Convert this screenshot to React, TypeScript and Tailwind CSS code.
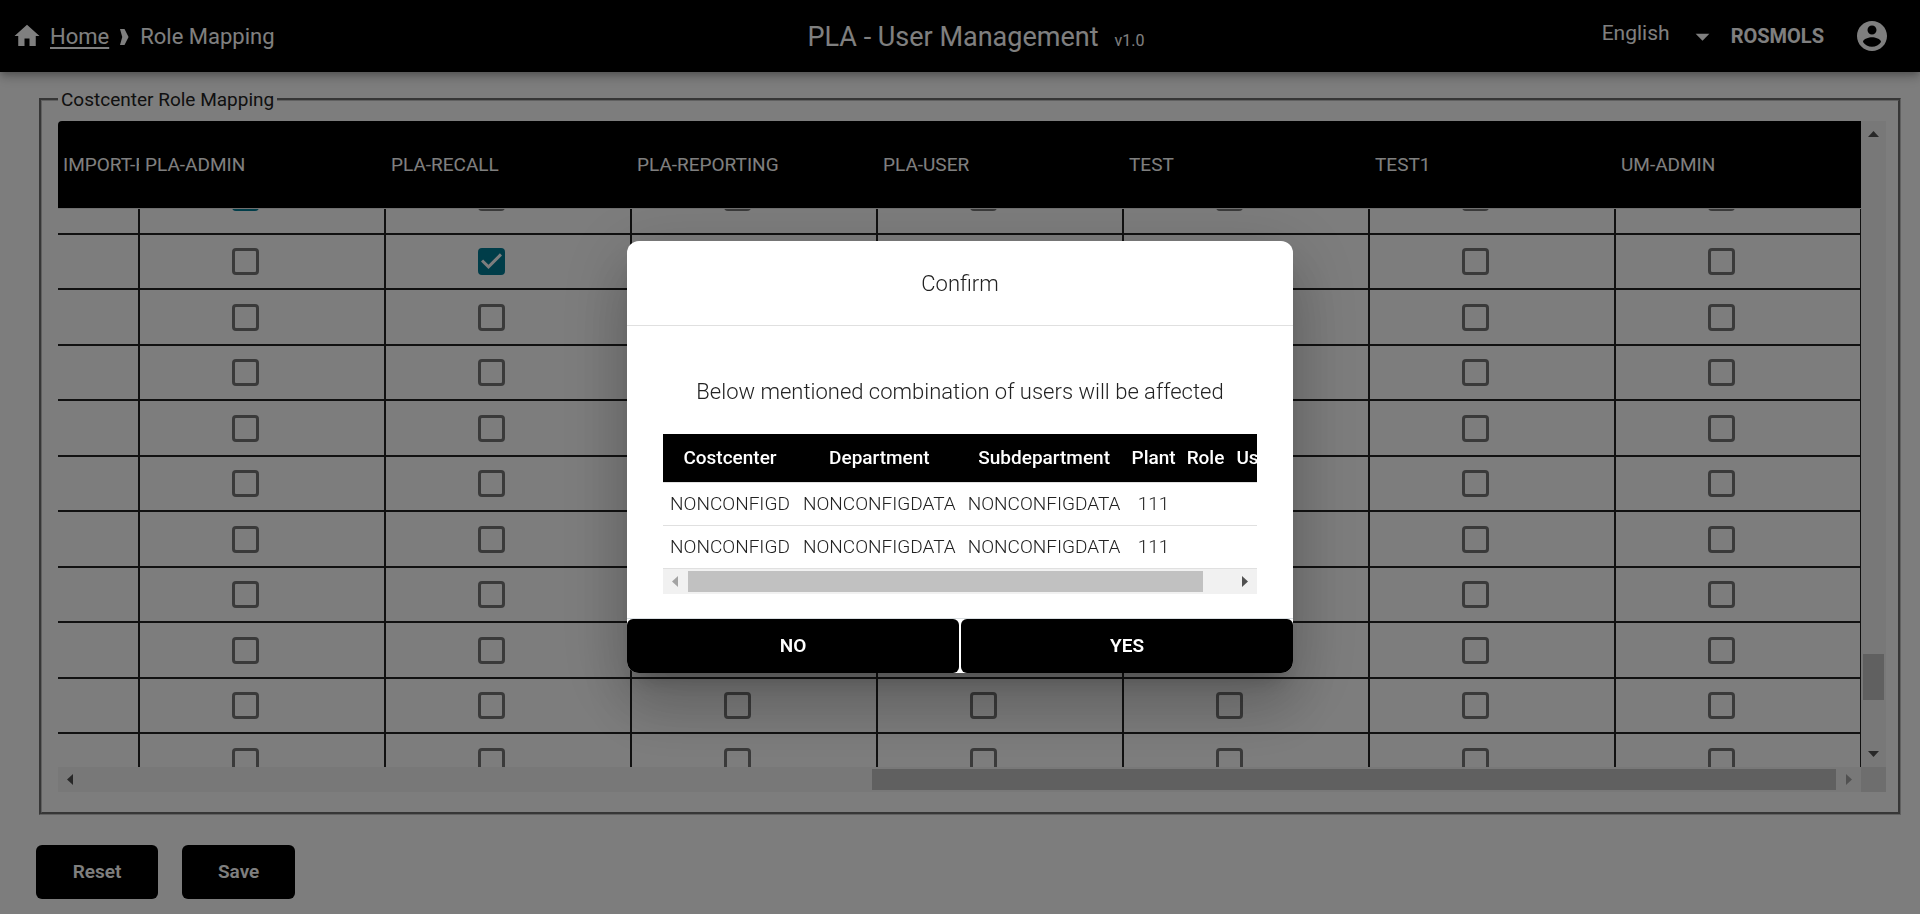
import React from "react";

const roles = ["PLA-ADMIN", "PLA-RECALL", "PLA-REPORTING", "PLA-USER", "TEST", "TEST1", "UM-ADMIN"];

const grants: string[][] = [["PLA-ADMIN"], ["PLA-RECALL"], [], [], [], [], [], [], [], [], []];

const affected = [
  { costcenter: "NONCONFIGD", department: "NONCONFIGDATA", subdepartment: "NONCONFIGDATA", plant: "111" },
  { costcenter: "NONCONFIGD", department: "NONCONFIGDATA", subdepartment: "NONCONFIGDATA", plant: "111" },
];

function RoleCheckbox({ label, checked }: { label: string; checked: boolean }) {
  return (
    <span className="grid size-[27px]">
      <input
        type="checkbox"
        aria-label={label}
        defaultChecked={checked}
        className="peer col-start-1 row-start-1 size-[27px] appearance-none rounded-[4px] border-3 border-[#757575] checked:border-[#007a93] checked:bg-[#007a93]"
      />
      <svg
        viewBox="3 3 18 18"
        aria-hidden="true"
        className="pointer-events-none col-start-1 row-start-1 hidden size-[27px] fill-[#fafafa] peer-checked:block"
      >
        <path d="M10 17l-5-5 1.41-1.41L10 14.17l7.59-7.59L19 8l-9 9z" />
      </svg>
    </span>
  );
}

function Arrow({ dir, className }: { dir: "up" | "down" | "left" | "right"; className: string }) {
  const points = {
    up: "7,16 18,16 12.5,10",
    down: "7,9 18,9 12.5,15",
    left: "15,7 15,18 9,12.5",
    right: "10,7 10,18 16,12.5",
  }[dir];
  return (
    <svg viewBox="0 0 25 25" aria-hidden="true" className={`size-[25px] shrink-0 ${className}`}>
      <polygon points={points} />
    </svg>
  );
}

function TopBar() {
  return (
    <header className="relative z-10 grid h-[72px] grid-cols-[1fr_auto_1fr] items-center bg-black text-white shadow-[0_3px_6px_-2px_rgba(0,0,0,0.2),0_6px_8px_0_rgba(0,0,0,0.14),0_2px_15px_0_rgba(0,0,0,0.12)]">
      <nav className="flex items-center pt-px pl-3 text-[22px]">
        <svg viewBox="0 0 24 24" aria-hidden="true" className="mr-2 mb-0.5 size-[30px] fill-current">
          <path d="M10 20v-6h4v6h5v-8h3L12 3 2 12h3v8z" />
        </svg>
        <a href="#home" className="underline decoration-2 underline-offset-3">
          Home
        </a>
        <svg viewBox="0 0 10 18" aria-hidden="true" className="mx-[11px] h-[18px] w-[9px] fill-current">
          <path d="M0 0h5l4.500 9-4.500 9H0l2.500-9z" />
        </svg>
        <span>Role Mapping</span>
      </nav>
      <h1 className="flex items-baseline gap-4 pt-0.5 pl-8">
        <span className="text-[27px]">PLA - User Management</span>
        <span className="text-base">v1.0</span>
      </h1>
      <div className="flex items-center justify-end pr-[30px]">
        <button type="button" className="flex items-center gap-4 text-[21px]">
          <span className="pb-1">English</span>
          <svg viewBox="0 0 24 24" aria-hidden="true" className="size-[33px] fill-current">
            <path d="M7 10l5 5 5-5z" />
          </svg>
        </button>
        <span className="ml-3 text-[20px] font-bold">ROSMOLS</span>
        <button type="button" aria-label="Account" className="ml-[30px]">
          <svg viewBox="0 0 24 24" aria-hidden="true" className="size-9 fill-current">
            <path d="M12 2C6.480 2 2 6.480 2 12s4.480 10 10 10 10-4.480 10-10S17.520 2 12 2zm0 3c1.660 0 3 1.340 3 3s-1.340 3-3 3-3-1.340-3-3 1.340-3 3-3zm0 14.200c-2.500 0-4.710-1.280-6-3.220.030-1.990 4-3.080 6-3.080 1.990 0 5.970 1.090 6 3.080-1.290 1.940-3.500 3.220-6 3.220z" />
          </svg>
        </button>
      </div>
    </header>
  );
}

function RoleGrid() {
  return (
    <div className="grid grid-cols-[1fr_25px]">
      <div className="h-[646px] overflow-hidden">
        <table className="relative z-1 w-[calc(100%+1px)] table-fixed border-separate border-spacing-0">
          <colgroup>
            <col className="w-[82px]" />
            {roles.map((r) => (
              <col key={r} />
            ))}
          </colgroup>
          <thead>
            <tr className="h-[88px] text-left text-[19px] text-white">
              <th scope="col" className="rounded-tl border-b border-[#e0e0e0] bg-black p-0 pt-0.5 pr-px pl-[5px] font-normal">
                <span className="block overflow-hidden whitespace-nowrap">IMPORT-ROLE</span>
              </th>
              {roles.map((r) => (
                <th
                  key={r}
                  scope="col"
                  className="border-b border-[#e0e0e0] bg-black p-0 pt-0.5 pl-[5px] font-normal whitespace-nowrap"
                >
                  {r}
                </th>
              ))}
            </tr>
          </thead>
        </table>
        <div className="-mt-12">
          <table className="w-[calc(100%+1px)] table-fixed border-separate border-spacing-0">
            <colgroup>
              <col className="w-[82px]" />
              {roles.map((r) => (
                <col key={r} />
              ))}
            </colgroup>
            <tbody>
              {grants.map((granted, i) => (
                <tr key={i} className="h-14 first:h-[74px] even:h-[55px]">
                  <td className="border-r-2 border-b-2 border-[#222]" />
                  {roles.map((r) => (
                    <td key={r} className="border-r-2 border-b-2 border-[#222] p-0 pl-[92px]">
                      <RoleCheckbox label={`${r}, row ${i + 1}`} checked={granted.includes(r)} />
                    </td>
                  ))}
                </tr>
              ))}
            </tbody>
          </table>
        </div>
      </div>
      <div className="flex flex-col items-center bg-[#f1f1f1]">
        <Arrow dir="up" className="fill-[#505050]" />
        <div className="mt-auto mb-[42px] h-[46px] w-[21px] bg-[#c1c1c1]" />
        <Arrow dir="down" className="fill-[#505050]" />
      </div>
      <div className="flex items-center bg-[#f1f1f1]">
        <Arrow dir="left" className="fill-[#505050]" />
        <div className="flex flex-1 justify-end">
          <div className="h-[21px] w-[55%] bg-[#c1c1c1]" />
        </div>
        <Arrow dir="right" className="fill-[#a3a3a3]" />
      </div>
      <div className="bg-[#dcdcdc]" />
    </div>
  );
}

function ConfirmDialog() {
  const wide = "border-b border-[#e0e0e0] px-1.5 whitespace-nowrap";
  const narrow = "border-b border-[#e0e0e0] px-[5px] whitespace-nowrap";
  return (
    <div className="fixed inset-0 z-20 flex items-center justify-center bg-black/50">
      <div
        role="dialog"
        aria-modal="true"
        aria-labelledby="confirm-title"
        className="w-[666px] overflow-hidden rounded-xl bg-white text-[#222] shadow-[0_16px_22px_-10px_rgba(0,0,0,0.2),0_36px_57px_4px_rgba(0,0,0,0.14),0_14px_69px_12px_rgba(0,0,0,0.12)]"
      >
        <h2 id="confirm-title" className="flex h-[85px] items-center justify-center border-b border-[#e0e0e0] text-[22px] font-light">
          Confirm
        </h2>
        <div className="px-9 pt-[49px] pb-6">
          <p className="mb-[26px] text-center text-[22px] leading-[33px] font-light">
            Below mentioned combination of users will be affected
          </p>
          <div className="overflow-hidden">
            <table className="w-max border-separate border-spacing-0 text-center text-[19px]">
              <thead>
                <tr className="h-[49px] bg-black text-white">
                  <th scope="col" className={`${wide} min-w-[134px] font-medium`}>Costcenter</th>
                  <th scope="col" className={`${wide} min-w-[164px] font-medium`}>Department</th>
                  <th scope="col" className={`${wide} min-w-[164px] font-medium`}>Subdepartment</th>
                  <th scope="col" className={`${narrow} font-medium`}>Plant</th>
                  <th scope="col" className={`${wide} font-medium`}>Role</th>
                  <th scope="col" className={`${wide} font-medium`}>Users</th>
                </tr>
              </thead>
              <tbody>
                {affected.map((a, i) => (
                  <tr key={i} className="h-[43px] font-light">
                    <td className={wide}>{a.costcenter}</td>
                    <td className={wide}>{a.department}</td>
                    <td className={wide}>{a.subdepartment}</td>
                    <td className={narrow}>{a.plant}</td>
                    <td className={wide} />
                    <td className={wide} />
                  </tr>
                ))}
              </tbody>
            </table>
          </div>
          <div className="flex items-center bg-[#f1f1f1]">
            <Arrow dir="left" className="fill-[#a3a3a3]" />
            <div className="flex-1">
              <div className="h-[21px] w-[94.7%] bg-[#c1c1c1]" />
            </div>
            <Arrow dir="right" className="fill-[#505050]" />
          </div>
        </div>
        <div className="grid grid-cols-2 gap-0.5 border-t border-[#dadfe2] text-[19px] font-semibold text-white">
          <button type="button" className="h-[54px] rounded-md bg-black">NO</button>
          <button type="button" className="h-[54px] rounded-md bg-black">YES</button>
        </div>
      </div>
    </div>
  );
}

export default function App() {
  return (
    <div className="min-h-screen bg-[#fafafa] font-[Roboto,'Liberation_Sans',sans-serif] text-[#222]">
      <TopBar />
      <main className="pt-[14px] pr-[19px] pl-9">
        <fieldset className="ml-[3px] border-3 border-[#c0c0c0] px-4 pr-3 pb-5 [border-style:groove]">
          <legend className="px-[3px] text-[19px] leading-[27px]">Costcenter Role Mapping</legend>
          <div className="pt-2">
            <RoleGrid />
          </div>
        </fieldset>
        <div className="flex gap-6 pt-[30px] text-[19px] font-semibold">
          <button type="button" className="h-[54px] min-w-[122px] rounded-md bg-black px-9 text-white">Reset</button>
          <button type="button" className="h-[54px] rounded-md bg-black px-9 text-white">Save</button>
        </div>
      </main>
      <ConfirmDialog />
    </div>
  );
}
